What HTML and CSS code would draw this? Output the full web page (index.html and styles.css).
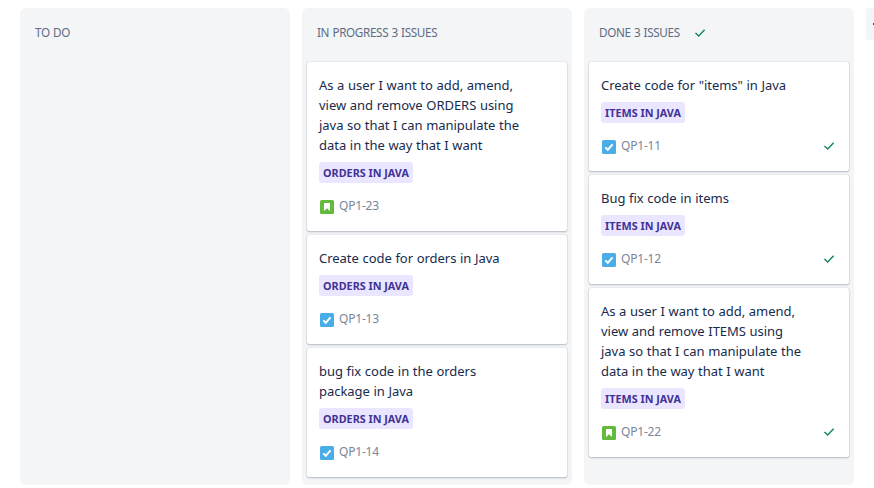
FILE: index.html
```html
<!DOCTYPE html>
<html lang="en">
<head>
<meta charset="utf-8">
<title>Board</title>
<link rel="stylesheet" href="styles.css">
</head>
<body>
<svg class="defs" aria-hidden="true">
  <symbol id="task" viewBox="0 0 14 14"><rect width="14" height="14" rx="1.5" fill="#4bade8"/><path d="M3.3 7.4 5.8 9.8 10.5 4.4" fill="none" stroke="#fff" stroke-width="2"/></symbol>
  <symbol id="story" viewBox="0 0 14 14"><rect width="14" height="14" rx="1.5" fill="#63ba3c"/><path d="M4 3.5Q4 3 4.5 3h5q.5 0 .5.5V11L7 8.3 4 11z" fill="#fff"/></symbol>
  <symbol id="check" viewBox="0 0 12 10"><path d="M1.5 5 4.7 8 10.6 1.8" fill="none" stroke="#168760" stroke-width="1.5"/></symbol>
</svg>
<main class="board">
  <section class="column">
    <h2 class="heading"><span>TO DO</span></h2>
  </section>
  <section class="column">
    <h2 class="heading"><span>IN PROGRESS 3 ISSUES</span></h2>
    <article class="card">
      <p class="title">As a user I want to add, amend,<br>view and remove ORDERS using<br>java so that I can manipulate the<br>data in the way that I want</p>
      <span class="epic orders">ORDERS IN JAVA</span>
      <div class="meta"><svg class="type"><use href="#story"/></svg><span class="key">QP1-23</span></div>
    </article>
    <article class="card">
      <p class="title">Create code for orders in Java</p>
      <span class="epic orders">ORDERS IN JAVA</span>
      <div class="meta"><svg class="type"><use href="#task"/></svg><span class="key">QP1-13</span></div>
    </article>
    <article class="card">
      <p class="title">bug fix code in the orders<br>package in Java</p>
      <span class="epic orders">ORDERS IN JAVA</span>
      <div class="meta"><svg class="type"><use href="#task"/></svg><span class="key">QP1-14</span></div>
    </article>
  </section>
  <section class="column">
    <h2 class="heading"><span>DONE 3 ISSUES</span><svg class="check"><use href="#check"/></svg></h2>
    <article class="card">
      <p class="title">Create code for "items" in Java</p>
      <span class="epic items">ITEMS IN JAVA</span>
      <div class="meta"><svg class="type"><use href="#task"/></svg><span class="key">QP1-11</span><svg class="check"><use href="#check"/></svg></div>
    </article>
    <article class="card">
      <p class="title">Bug fix code in items</p>
      <span class="epic items">ITEMS IN JAVA</span>
      <div class="meta"><svg class="type"><use href="#task"/></svg><span class="key">QP1-12</span><svg class="check"><use href="#check"/></svg></div>
    </article>
    <article class="card">
      <p class="title">As a user I want to add, amend,<br>view and remove ITEMS using<br>java so that I can manipulate the<br>data in the way that I want</p>
      <span class="epic items">ITEMS IN JAVA</span>
      <div class="meta"><svg class="type"><use href="#story"/></svg><span class="key">QP1-22</span><svg class="check"><use href="#check"/></svg></div>
    </article>
  </section>
  <div class="add"><svg viewBox="0 0 12 12"><path d="M0 6h12M6 0v12" stroke="#42526e" stroke-width="2"/></svg></div>
</main>
</body>
</html>
```
FILE: styles.css
```css
* { box-sizing: border-box; }
body {
  margin: 0;
  height: 488px;
  overflow: hidden;
  background: #fff;
  color: #172b4d;
  font-family: "Segoe UI", "Noto Sans", sans-serif;
}
.defs { display: none; }
.board { display: flex; gap: 12px; padding: 8px 0 0 20px; }
.column {
  flex: none;
  width: 270px;
  height: 477px;
  padding: 0 5px;
  border-radius: 6px;
  background: #f4f5f7;
}
.heading {
  display: flex;
  align-items: center;
  height: 49px;
  margin: 0 0 5px;
  padding-left: 10px;
  color: #5e6c84;
  font-size: 11.7px;
  font-weight: 400;
  letter-spacing: -.35px;
  word-spacing: .6px;
}
.heading span { margin-bottom: 2px; }
.heading .check { margin-left: 14px; }
.card {
  width: 260px;
  margin-bottom: 4px;
  padding: 13px 12px 16px;
  border-radius: 2px;
  background: #fff;
  box-shadow: 0 1px 2px rgba(9, 30, 66, .25), 0 0 1px rgba(9, 30, 66, .31);
}
.title {
  margin: 0 0 7px;
  font-size: 13px;
  line-height: 20px;
  white-space: nowrap;
  letter-spacing: -.03px;
  word-spacing: .3px;
}
.epic {
  display: flex;
  justify-content: center;
  height: 21px;
  border-radius: 3px;
  background: #eae6ff;
  color: #403294;
  font-size: 10.8px;
  font-weight: 700;
  line-height: 21px;
  white-space: nowrap;
}
.orders { width: 94px; }
.items { width: 84px; }
.meta { display: flex; align-items: center; height: 18px; margin-top: 14px; }
.type { width: 14px; height: 14px; margin: 1px 5px 0 1px; }
.key { color: #7a869a; font-size: 12px; letter-spacing: -.2px; line-height: 18px; }
.check { width: 12px; height: 10px; }
.meta .check { margin-left: auto; margin-right: 2px; }
.add {
  flex: none;
  width: 32px;
  height: 32px;
  padding: 10px 7px;
  border-radius: 3px;
  background: #f4f5f7;
}
.add svg { display: block; width: 12px; height: 12px; }
```
